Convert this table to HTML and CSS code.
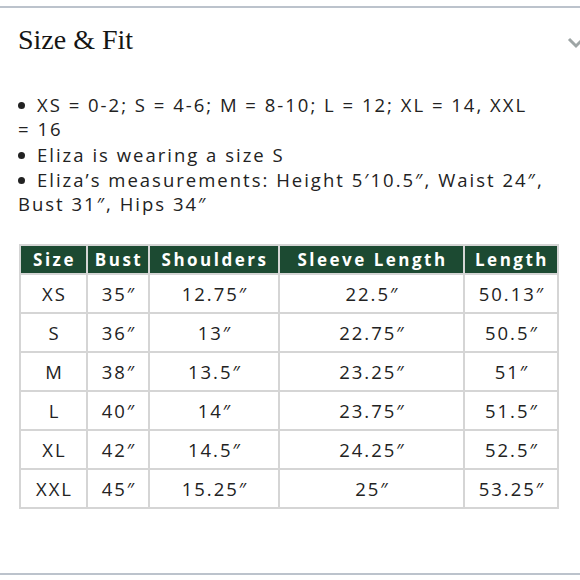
FILE: index.html
```html
<!DOCTYPE html>
<html>
<head>
<meta charset="utf-8">
<link rel="stylesheet" href="styles.css">
</head>
<body>
<section class="panel">
  <div class="panel-head">
    <h2 class="title">Size &amp; Fit</h2>
    <svg class="chevron" width="18" height="12" viewBox="0 0 18 12"><polyline points="2,2 9,9 16,2" fill="none" stroke="#9ea5a5" stroke-width="3"/></svg>
  </div>
  <ul class="notes">
    <li><span class="dot"></span>XS = 0-2; S = 4-6; M = 8-10; L = 12; XL = 14, XXL =&nbsp;16</li>
    <li><span class="dot"></span>Eliza is wearing a size S</li>
    <li><span class="dot"></span>Eliza’s measurements: Height 5′10.5″, Waist 24″, Bust 31″, Hips 34″</li>
  </ul>
  <table class="sizes">
    <colgroup>
      <col class="c1"><col class="c2"><col class="c3"><col class="c4"><col class="c5">
    </colgroup>
    <thead>
      <tr><th>Size</th><th>Bust</th><th>Shoulders</th><th>Sleeve Length</th><th>Length</th></tr>
    </thead>
    <tbody>
      <tr><td>XS</td><td>35″</td><td>12.75″</td><td>22.5″</td><td>50.13″</td></tr>
      <tr><td>S</td><td>36″</td><td>13″</td><td>22.75″</td><td>50.5″</td></tr>
      <tr><td>M</td><td>38″</td><td>13.5″</td><td>23.25″</td><td>51″</td></tr>
      <tr><td>L</td><td>40″</td><td>14″</td><td>23.75″</td><td>51.5″</td></tr>
      <tr><td>XL</td><td>42″</td><td>14.5″</td><td>24.25″</td><td>52.5″</td></tr>
      <tr><td>XXL</td><td>45″</td><td>15.25″</td><td>25″</td><td>53.25″</td></tr>
    </tbody>
  </table>
  <div class="spacer"></div>
</section>
</body>
</html>
```
FILE: styles.css
```css
html, body {
  margin: 0;
  padding: 0;
  background: #fff;
}
.panel {
  margin-top: 6px;
  border-top: 2px solid #bcc3cc;
  border-bottom: 2px solid #bcc3cc;
  width: 580px;
  overflow: hidden;
}
.panel-head {
  display: flex;
  justify-content: space-between;
  align-items: center;
  height: 64px;
  padding-left: 18px;
}
.title {
  margin: 0;
  font-family: "Liberation Serif", serif;
  font-weight: normal;
  font-size: 28px;
  color: #151515;
}
.chevron {
  margin-right: -5px;
  margin-top: 6px;
}
.notes {
  list-style: none;
  margin: 21px 0 0 0;
  padding: 0 30px 0 18px;
  font-family: "Open Sans", sans-serif;
  font-size: 18.5px;
  letter-spacing: 2px;
  line-height: 24px;
  color: #222;
}
.notes li + li {
  margin-top: 1.5px;
}
.dot {
  display: inline-block;
  width: 7px;
  height: 7px;
  border-radius: 50%;
  background: #222;
  vertical-align: 3px;
  margin-right: 12px;
}
.sizes {
  margin: 28px 0 0 19px;
  width: 538px;
  border-collapse: collapse;
  border: 2px solid #d5d5d5;
  font-family: "Open Sans", sans-serif;
  table-layout: fixed;
}
.c1 { width: 67px; }
.c2 { width: 62px; }
.c3 { width: 130px; }
.c4 { width: 185px; }
.c5 { width: 94px; }
.sizes th {
  background: #1c4a32;
  color: #fff;
  font-weight: 700;
  font-size: 17px;
  letter-spacing: 2.5px;
  height: 27px;
  padding: 0 0 0 2px;
  border: 2px solid #d5d5d5;
  text-align: center;
}
.sizes td {
  height: 37px;
  padding: 0 0 0 2px;
  border: 2px solid #d5d5d5;
  text-align: center;
  font-size: 18.5px;
  letter-spacing: 2px;
  color: #222;
}
.spacer {
  height: 64px;
}
```
